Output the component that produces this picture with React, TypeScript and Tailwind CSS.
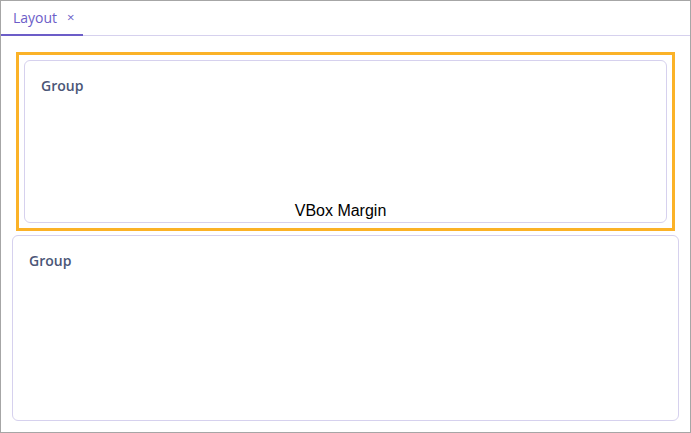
import type React from "react";

const font = { fontFamily: '"Open Sans", "Noto Sans", sans-serif' };

function Group({ className = "" }: { className?: string }): React.ReactElement {
  return (
    <div className={`rounded-[6px] border border-[#d6d1ee] bg-white px-4 pt-[15px] ${className}`}>
      <div className="text-[14px] font-semibold leading-[20px] text-[#4b5677]">Group</div>
    </div>
  );
}

export default function App(): React.ReactElement {
  return (
    <div
      className="flex h-[433px] w-[691px] flex-col border border-[#a6a6a6] bg-white"
      style={font}
    >
      <div className="flex h-[35px] shrink-0 items-end border-b border-[#d6d1ee]">
        <div className="-mb-px flex h-[35px] w-[82px] items-center gap-[10px] border-b-2 border-[#6c5dc8] pl-3 text-[#6c5dc8]">
          <span className="text-[14px] leading-none">Layout</span>
          <span className="text-[13px] leading-none">×</span>
        </div>
      </div>

      <div className="flex flex-1 flex-col gap-[4px] px-[11px] pb-[11px] pt-[16px]">
        <div className="relative mx-[4px] flex h-[179px] shrink-0 border-[3px] border-[#fbb227] p-[5px]">
          <Group className="flex-1" />
          <div
            className="absolute bottom-[8px] left-0 right-[10px] text-center text-[16px] leading-[18px] text-black"
            style={{ fontFamily: '"Liberation Sans", Arial, sans-serif' }}
          >
            VBox Margin
          </div>
        </div>
        <Group className="flex-1" />
      </div>
    </div>
  );
}
